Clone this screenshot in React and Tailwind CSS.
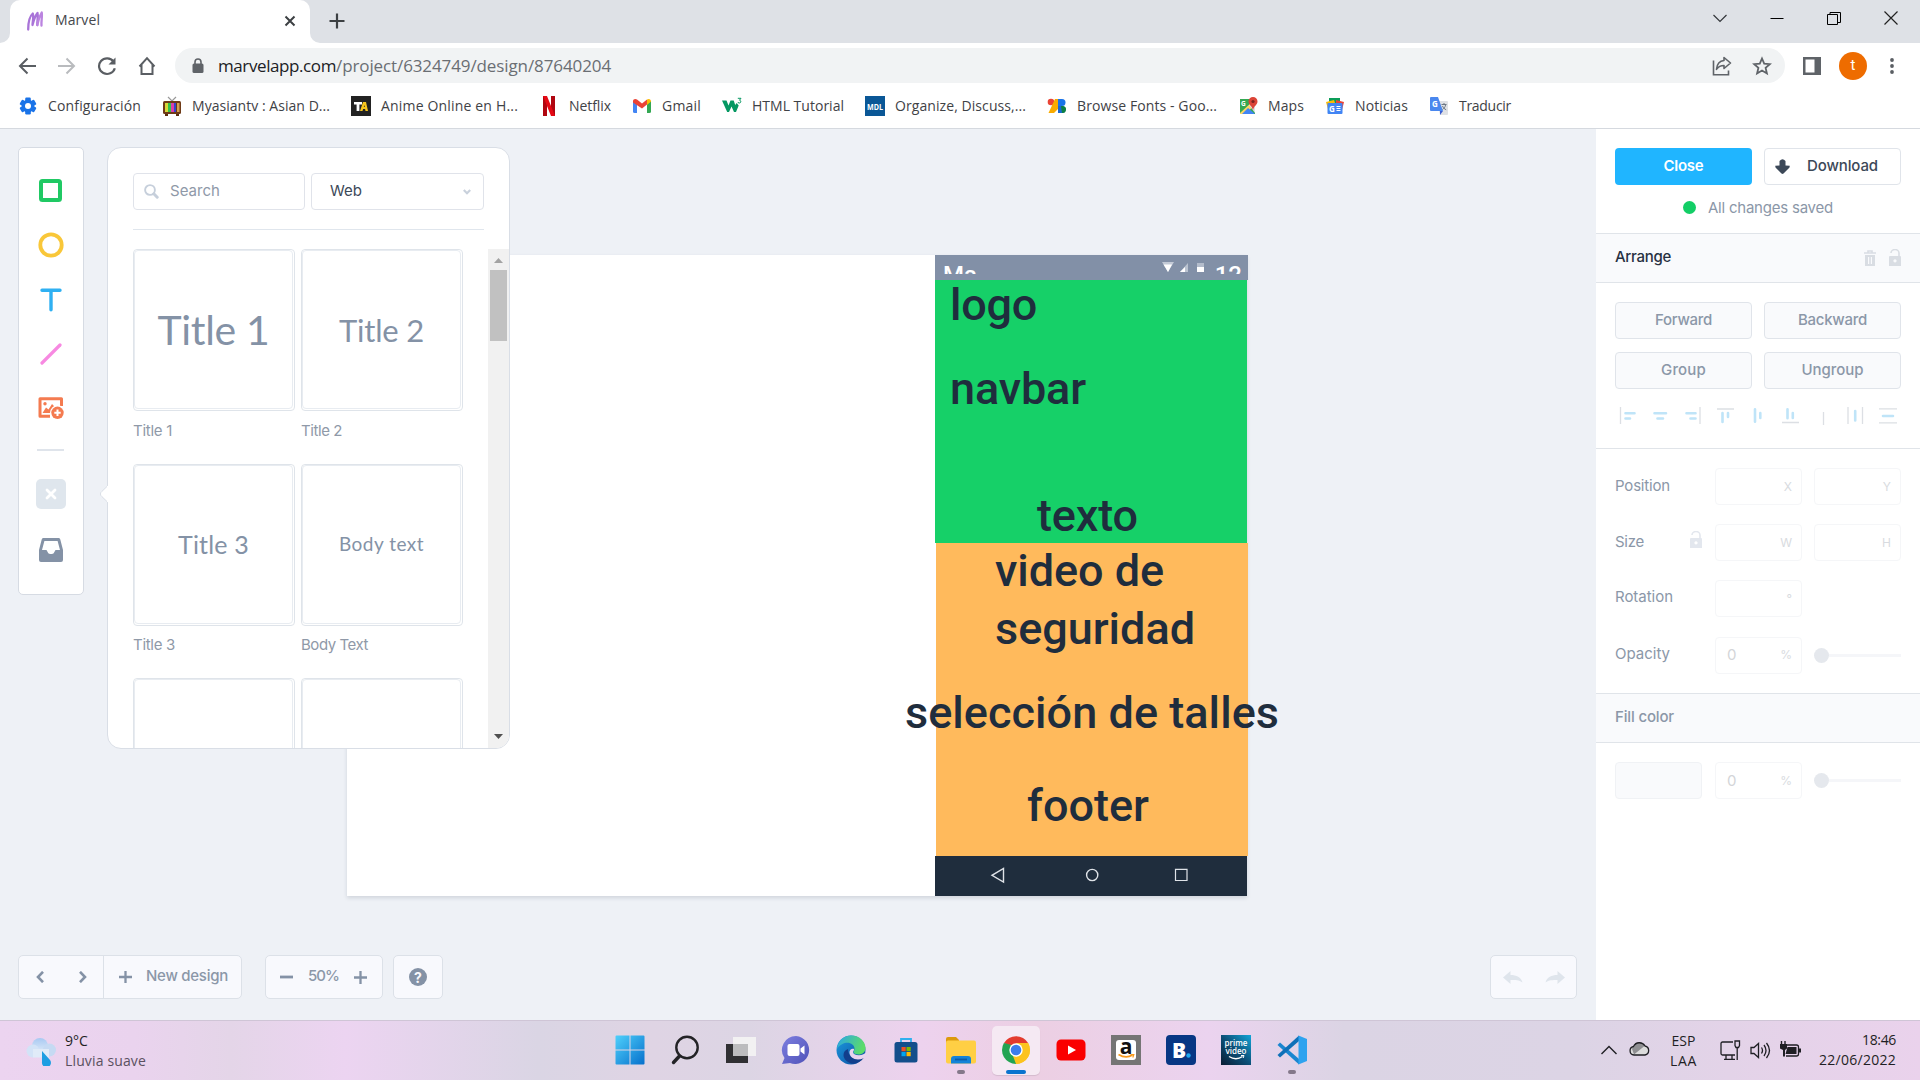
import { useLayoutEffect, useRef, useState } from "react";

// Text set to an exact measure: the tracking is computed from the natural width.
function Fit({ w, className = "", children }) {
  const ref = useRef(null);
  const [ls, setLs] = useState(0);
  useLayoutEffect(() => {
    const natural = ref.current.getBoundingClientRect().width;
    setLs((w - natural) / String(children).length);
  }, [w, children]);
  return (
    <span ref={ref} className={`inline-block shrink-0 whitespace-nowrap ${className}`} style={{ letterSpacing: `${ls}px` }}>
      {children}
    </span>
  );
}

const sys = "font-['Open_Sans','Noto_Sans',sans-serif]";

/* ---------- browser chrome ---------- */

function TabStrip() {
  return (
    <div className="flex h-[43px] bg-[#dee1e6]">
      <svg className="mt-[33px] h-[10px] w-[10px]" viewBox="0 0 10 10"><path d="M10 0v10H0a10 10 0 0 0 10-10z" fill="#fff" /></svg>
      <div className="flex h-[43px] w-[300px] items-start rounded-t-[10px] bg-white pt-[10px]">
        <svg className="ml-[16px] h-[22px] w-[18px]" viewBox="0 0 18 22" fill="none" stroke="#a974d8" strokeWidth="2.300" strokeLinecap="round" strokeLinejoin="round">
          <path d="M2.200 19.500C2.200 13 4 6 6.800 3.500C8 7 6.500 12 6.500 15C7.500 11 9 6 11.500 3C12.500 7 11 11 11.300 15" />
          <path d="M11.300 15C12 11 13.500 6 15.700 2.500C16.500 6 15 12 15.500 15.500" stroke="#bb84e0" />
        </svg>
        <Fit w={45} className="ml-[11px] h-[20px] text-[14px] leading-[20px] text-[#45484c]">Marvel</Fit>
        <svg className="mt-[5px] ml-[184px] h-[12px] w-[12px]" viewBox="0 0 12 12" stroke="#3c4043" strokeWidth="2"><path d="M1.500 1.500l9 9M10.500 1.500l-9 9" /></svg>
      </div>
      <svg className="mt-[33px] h-[10px] w-[10px]" viewBox="0 0 10 10"><path d="M0 0v10h10A10 10 0 0 1 0 0z" fill="#fff" /></svg>
      <svg className="mt-[13px] ml-[9px] h-[16px] w-[16px]" viewBox="0 0 16 16" stroke="#3c4043" strokeWidth="2.200"><path d="M8 0.500v15M.500 8h15" /></svg>
      <div className="ml-auto flex items-start gap-[43px] pt-[11px] pr-[22px]">
        <svg className="h-[14px] w-[14px]" viewBox="0 0 14 14" fill="none" stroke="#33363a" strokeWidth="1.200"><path d="M.500 4L7 10.500L13.500 4" /></svg>
        <svg className="h-[14px] w-[14px]" viewBox="0 0 14 14" stroke="#000" strokeWidth="1"><path d="M.500 7.500h13" /></svg>
        <svg className="h-[14px] w-[14px]" viewBox="0 0 14 14" fill="none" stroke="#000" strokeWidth="1"><path d="M.500 3.500h10v10h-10zM3 3.500V1.500h10.500V11.500H10.500" /></svg>
        <svg className="h-[14px] w-[14px]" viewBox="0 0 14 14" stroke="#222" strokeWidth="1.200"><path d="M.500 .500l13 13M13.500 .500l-13 13" /></svg>
      </div>
    </div>
  );
}

function AddressRow() {
  return (
    <div className="flex h-[45px] items-center bg-white">
      <div className="flex w-[175px] items-center gap-[20px] pl-[17px]">
        <svg className="h-5 w-5" viewBox="0 0 20 20" fill="none" stroke="#5a5e63" strokeWidth="2"><path d="M19 10H3M10.500 2.500L3 10l7.500 7.500" /></svg>
        <svg className="h-5 w-5" viewBox="0 0 20 20" fill="none" stroke="#b9bbbe" strokeWidth="2"><path d="M1 10h16M9.500 2.500L17 10l-7.500 7.500" /></svg>
        <svg className="h-5 w-5" viewBox="0 0 20 20" fill="none" stroke="#5a5e63" strokeWidth="2.200"><path d="M16.500 5.500A8 7.800 0 1 0 17.800 12.200" /><path d="M18.500 1.500v7h-7z" fill="#5a5e63" stroke="none" /></svg>
        <svg className="h-5 w-5" viewBox="0 0 20 20" fill="none" stroke="#5a5e63" strokeWidth="2"><path d="M2.500 10.500L10 2.200l7.500 8.300M4.500 9v9h11V9" /></svg>
      </div>
      <div className="flex h-[35px] w-[1610px] items-center rounded-full bg-[#f1f3f4]">
        <svg className="ml-[17px] h-[16px] w-[12px]" viewBox="0 0 12 16"><rect x=".500" y="5.500" width="11" height="9.500" rx="1.500" fill="#5f6368" /><path d="M3 6V4a3 3 0 0 1 6 0v2" fill="none" stroke="#5f6368" strokeWidth="1.600" /></svg>
        <Fit w={118} className="ml-[14px] h-[26px] text-[17px] leading-[25px] text-[#202124]">marvelapp.com</Fit>
        <Fit w={275} className="h-[26px] text-[17px] leading-[25px] text-[#6a6e73]">/project/6324749/design/87640204</Fit>
        <svg className="ml-auto h-[22px] w-[22px]" viewBox="0 0 22 22" fill="none" stroke="#5f6368" strokeWidth="1.600"><path d="M2.500 5.500v14.300h15v-4.300" /><path d="M13 2.500l6.500 5.500L13 13.500v-3c-3.500 0-5.500 1-7.500 3.800C6 9 9 5.800 13 5.500z" strokeLinejoin="round" /></svg>
        <svg className="mr-[13px] ml-[19px] h-[20px] w-[20px]" viewBox="0 0 20 20" fill="none" stroke="#5f6368" strokeWidth="1.800"><path d="M10 2.500l2.200 5.200 5.600.500-4.200 3.700 1.300 5.500L10 14.500l-4.900 2.900 1.300-5.500L2.200 8.200l5.600-.500z" /></svg>
      </div>
      <svg className="ml-[18px] h-[18px] w-[18px]" viewBox="0 0 18 18"><path d="M0 0h18v18H0z" fill="#5f6368" /><path d="M2.500 2.500h9v13h-9z" fill="#fff" /></svg>
      <span className="ml-[18px] flex h-[28px] w-[28px] items-center justify-center rounded-full bg-[#ee6c00] font-[Roboto,sans-serif] text-[15px] text-white">t</span>
      <svg className="ml-[22px] h-[18px] w-[6px]" viewBox="0 0 6 18" fill="#5a5e63"><circle cx="3" cy="3" r="1.900" /><circle cx="3" cy="9" r="1.900" /><circle cx="3" cy="15" r="1.900" /></svg>
    </div>
  );
}

const bookmarks = [
  [93, "Configuración", <g key="i"><g fill="#1a73e8"><circle cx="10" cy="10" r="6.300" />{[0, 60, 120].map((a) => <rect key={a} x="7.200" y="1.600" width="5.600" height="16.800" rx="1.200" transform={`rotate(${a} 10 10)`} />)}</g><circle cx="10" cy="10" r="3" fill="#fff" /></g>],
  [138, "Myasiantv : Asian D...", <g key="i"><path d="M6 1l4 4 4-4" stroke="#999" fill="none" strokeWidth="1.200" /><rect x="1" y="5" width="18" height="13" rx="1.500" fill="#6e3a17" /><path d="M3 18h3v2H3zM14 18h3v2h-3z" fill="#5b2e10" /><path d="M3 7h3v9H3z" fill="#d8d838" /><path d="M6 7h3v9H6z" fill="#33c24d" /><path d="M9 7h3v9H9z" fill="#db3ea9" /><path d="M12 7h2v9h-2z" fill="#3344cc" /><path d="M15 7h2.500v9H15z" fill="#d5a052" /></g>],
  [137, "Anime Online en H...", <g key="i"><rect width="20" height="20" fill="#222" /><path d="M3 6h8v2.400H8.400V15H5.600V8.400H3z" fill="#fff" /><path d="M9 15l3-9h3l2 9h-2.500l-.400-2h-2l-.600 2zm3.800-4h1l-.300-2z" fill="#f7c51d" /></g>],
  [42, "Netflix", <g key="i" transform="translate(1 0)"><path d="M3 0h4v20H3z" fill="#b00610" /><path d="M11 0h4v20h-4z" fill="#b00610" /><path d="M3 0h4l8 20h-4z" fill="#e50914" /></g>],
  [39, "Gmail", <g key="i"><path d="M1 5h4v12H2.500A1.500 1.500 0 0 1 1 15.500z" fill="#4285f4" /><path d="M15 5h4v10.500a1.500 1.500 0 0 1-1.500 1.500H15z" fill="#34a853" /><path d="M1 5.500C1 3 3.500 2.500 5 3.600L10 7.500l5-3.900v5L10 12.500 1 6.500z" fill="#ea4335" /><path d="M15 3.600c1.800-1.200 4-.600 4 2L15 9z" fill="#fbbc04" /></g>],
  [92, "HTML Tutorial", <g key="i"><path d="M0 4.500h4.500l2 5 2-5h3.200l1.500 4.500 1.500-2 2 2.500L14 16h-2L9.500 10.500 7 16H5.200z" fill="#059862" /><path d="M15.800 2.300h3.200l-1.500 1.900c2 .200 1.500 3-.200 2.800L15.800 6.500" fill="none" stroke="#059862" strokeWidth="1" /></g>],
  [131, "Organize, Discuss,...", <g key="i"><rect width="20" height="20" fill="#0a5796" /><text x="10" y="13.700" textAnchor="middle" textLength="16" lengthAdjust="spacingAndGlyphs" fontSize="9.500" fontWeight="700" fill="#fff">MDL</text></g>],
  [140, "Browse Fonts - Goo...", <g key="i"><circle cx="4" cy="6" r="3.300" fill="#ea4335" /><path d="M8 3h4v9L7 17H1.500z" fill="#f9ab00" /><path d="M11 3h4a3.500 3.500 0 0 1 0 7h-4z" fill="#1a73e8" /><path d="M11 10h4a3.500 3.500 0 0 1 0 7h-4z" fill="#1967d2" /><path d="M14 10h2a3.500 3.500 0 0 1-1 7z" fill="#0d8043" /></g>],
  [36, "Maps", <g key="i"><path d="M2 3h15v15H2z" fill="#34a853" /><path d="M2 17L15 5l2 1v3L7 18H2z" fill="#fdd663" /><path d="M10 12l7 6H4z" fill="#4285f4" /><path d="M11 9l6 8V6z" fill="#dfe3e8" /><path d="M15 1a4.500 4.500 0 0 1 4.500 4.500C19.500 9 15.500 10 15 14.500 14.500 10 10.500 9 10.500 5.500A4.500 4.500 0 0 1 15 1z" fill="#db4437" /><circle cx="15" cy="5.500" r="1.600" fill="#7b231e" /><text x="3" y="9.500" fontSize="6.500" fontWeight="700" fill="#fff">G</text></g>],
  [53, "Noticias", <g key="i"><path d="M4 2h11v7H4z" fill="#0c9d58" /><path d="M1 6l8-2 2 6-8 3z" fill="#fbbc04" /><path d="M11 4l8 2-2 8-6-2z" fill="#ea4335" /><rect x="2.500" y="7" width="15" height="11" rx="1" fill="#4285f4" /><text x="4" y="15.500" fontSize="8" fontWeight="700" fill="#fff">G</text><path d="M11.500 10.500h4M11.500 12.500h4M11.500 14.500h4" stroke="#fff" strokeWidth="1.100" /></g>],
  [52, "Traducir", <g key="i"><path d="M8 5h10a1 1 0 0 1 1 1v12a1 1 0 0 1-1 1h-7z" fill="#dfe1e5" /><path d="M2 1h7l5 14H2a1 1 0 0 1-1-1V2a1 1 0 0 1 1-1z" fill="#4a87ee" /><path d="M11 15h3l-3 4z" fill="#3a5bd0" /><text x="3" y="11" fontSize="8" fontWeight="700" fill="#fff">G</text><path d="M12.500 8.500h5M15 7v1.500M16.700 8.500c-.500 3-2 4-3.200 5M13.500 10c.700 1.800 2 3 3.700 3.800" stroke="#6d7783" fill="none" /></g>],
];

function Bookmarks() {
  return (
    <div className="flex h-[41px] items-center gap-[21px] border-b border-[#d5d9df] bg-white pb-[5px] pl-[18px]">
      {bookmarks.map(([w, label, icon]) => (
        <div key={label} className="flex items-center gap-[10px]">
          <svg className="h-5 w-5 font-['Open_Sans',sans-serif]" viewBox="0 0 20 20">{icon}</svg>
          <Fit w={w} className="h-[20px] text-[14px] leading-[19px] text-[#3f4246]">{label}</Fit>
        </div>
      ))}
    </div>
  );
}

/* ---------- editor ---------- */

function ToolRail() {
  return (
    <div className="absolute top-[18px] left-[18px] flex h-[448px] w-[66px] flex-col items-center rounded-[5px] border border-[#d6dbe3] bg-white pt-[31px] pr-[1px]">
      <svg className="h-[23px] w-[23px]" viewBox="0 0 23 23"><rect x="2" y="2" width="19" height="19" rx="1.500" fill="none" stroke="#20c964" strokeWidth="4" /></svg>
      <svg className="mt-[30px] h-[26px] w-[26px]" viewBox="0 0 26 26"><circle cx="13" cy="13" r="10.700" fill="none" stroke="#f9c739" strokeWidth="3.800" /></svg>
      <svg className="mt-[30px] h-[24px] w-[22px]" viewBox="0 0 22 24" stroke="#2fb0f2" strokeWidth="3.400" strokeLinecap="round"><path d="M2 2.300h18M11 2.300v19.400" /></svg>
      <svg className="mt-[31px] h-[22px] w-[22px]" viewBox="0 0 22 22" stroke="#f789e1" strokeWidth="3.200" strokeLinecap="round"><path d="M2 20L20 2" /></svg>
      <svg className="mt-[32px] h-[22px] w-[26px]" viewBox="0 0 26 22" fill="none">
        <path d="M12 19.300H2V1.700h21.500V9" stroke="#f47b50" strokeWidth="3" strokeLinejoin="round" />
        <circle cx="7" cy="6.800" r="1.700" fill="#f47b50" /><path d="M4.500 16L8 10.500l2.500 2L14 7l3.500 3.500-5 5.500z" fill="#f47b50" />
        <circle cx="19.500" cy="15.800" r="7.500" fill="#fff" /><circle cx="19.500" cy="15.800" r="6.200" fill="#f47b50" /><path d="M19.500 12.600v6.400M16.300 15.800h6.400" stroke="#fff" strokeWidth="2" />
      </svg>
      <span className="mt-[30px] h-[2px] w-[27px] bg-[#dfe4eb]" />
      <span className="mt-[28px] flex h-[30px] w-[30px] items-center justify-center rounded-[5px] bg-[#dfe6ed]">
        <svg className="h-[12px] w-[12px]" viewBox="0 0 12 12" stroke="#fff" strokeWidth="2.800" strokeLinecap="round"><path d="M2 2l8 8M10 2l-8 8" /></svg>
      </span>
      <svg className="mt-[29px] h-[24px] w-[24px]" viewBox="0 0 24 24"><path fillRule="evenodd" d="M4.500 0h15c1 0 1.500.600 1.800 1.500L24 12v10a2 2 0 0 1-2 2H2a2 2 0 0 1-2-2V12L2.700 1.500C3 .600 3.500 0 4.500 0zM5.400 3L3 12h4.500l1.700 3c.700 1.300 4.900 1.300 5.600 0l1.700-3H21L18.600 3z" fill="#8492a6" /></svg>
    </div>
  );
}

const cards = [
  [["Title 1", 112, "text-[41px]", "Title 1", 39], ["Title 2", 85, "text-[31px]", "Title 2", 41]],
  [["Title 3", 71, "text-[25px]", "Title 3", 42], ["Body text", 85, "text-[19px]", "Body Text", 67]],
  [[null], [null]],
];

function Library() {
  return (
    <div className="absolute top-[18px] left-[107px] h-[602px] w-[403px]">
      <svg className="absolute top-[338px] left-[-7px] z-10 h-[18px] w-[9px]" viewBox="0 0 9 18"><path d="M8 .500L1.800 6.500a3 3 0 0 0 0 5L8 17.500" fill="#fff" stroke="#d9dee6" /><path d="M7 1h2v16H7z" fill="#fff" /></svg>
      <div className="flex h-full w-full flex-col overflow-hidden rounded-[14px] border border-[#d9dee6] bg-white">
        <div className="mx-[25px] flex h-[82px] shrink-0 gap-[6px] border-b border-[#e0e6ed] pt-[25px] font-[Inter,sans-serif] text-[15px]">
          <div className="flex h-[37px] w-[172px] items-center rounded-[4px] border border-[#e0e3ea]">
            <svg className="ml-[10px] h-[15px] w-[15px]" viewBox="0 0 15 15" fill="none" stroke="#c6cfdb"><circle cx="6" cy="6" r="4.900" strokeWidth="1.900" /><path d="M9.800 9.800l3.400 3.400" strokeWidth="3" strokeLinecap="round" /></svg>
            <Fit w={50} className="ml-[11px] text-[#8f99a8]">Search</Fit>
          </div>
          <div className="flex h-[37px] w-[173px] items-center rounded-[4px] border border-[#e0e3ea]">
            <Fit w={32} className="ml-[18px] text-[#3c4858]">Web</Fit>
            <svg className="mr-[12px] ml-auto h-[6px] w-[8px]" viewBox="0 0 8 6" fill="none" stroke="#c9d1dc" strokeWidth="2.200"><path d="M.800 1L4 4.200 7.200 1" /></svg>
          </div>
        </div>
        <div className="mt-[19px] flex min-h-0 flex-1 justify-between pl-[25px]">
          <div className="flex flex-col overflow-hidden">
            {cards.map((row, i) => (
              <div key={i} className="flex h-[214.500px] shrink-0 gap-[6px]">
                {row.map(([text, w, size, label, lw], j) => (
                  <div key={j} className="w-[162px]">
                    <div className="h-[162px] rounded-[4px] border border-[#dfe4ea] pr-[1px] pb-[1px]">
                      <div className="flex h-full items-center justify-center rounded-[4px] border border-[#e8ecf1] pt-[1px] font-[Lato,sans-serif] text-[#8492a6]">
                        {text && <Fit w={w} className={size}>{text}</Fit>}
                      </div>
                    </div>
                    {label && <Fit w={lw} className="mt-[8.500px] font-[Inter,sans-serif] text-[15px] text-[#8f99a8]">{label}</Fit>}
                  </div>
                ))}
              </div>
            ))}
          </div>
          <div className="flex w-[21px] flex-col items-center bg-[#f1f1f1]">
            <svg className="mt-[9px] h-[5px] w-[9px]" viewBox="0 0 9 5"><path d="M0 5L4.500 0 9 5z" fill="#a3a3a3" /></svg>
            <span className="mt-[7px] h-[71px] w-[17px] bg-[#c1c1c1]" />
            <svg className="mt-auto mb-[9px] h-[5px] w-[9px]" viewBox="0 0 9 5"><path d="M0 0L4.500 5 9 0z" fill="#505050" /></svg>
          </div>
        </div>
      </div>
    </div>
  );
}

const layers = [
  ["logo", 87, "top-[21px] left-[15px]"],
  ["navbar", 136, "top-[105px] left-[15px]"],
  ["texto", 101, "top-[232px] left-[102px]"],
  ["video de", 169, "top-[287px] left-[60px]"],
  ["seguridad", 200, "top-[345px] left-[60px]"],
  ["selección de talles", 374, "top-[429px] left-[-30px]"],
  ["footer", 122, "top-[522px] left-[92px]"],
];

function Artboard() {
  return (
    <div className="absolute top-[126px] left-[347px] flex h-[641px] w-[900px] justify-end bg-white shadow-[0_2px_4px_rgba(31,45,61,0.14)]">
      <div className="relative -mr-px h-[641px] w-[313px]">
        <div className="flex h-[25px] justify-between bg-[#8290a7] pr-[6px] pl-[8px] font-[Roboto,sans-serif] text-[24px] leading-[28px] font-medium text-white">
          <span className="mt-[6px] h-[13px] overflow-hidden">Ma</span>
          <div className="flex">
            <svg className="mt-[7px] mr-[5px] h-[12px] w-[48px]" viewBox="0 0 48 12"><path d="M0 0Q6 -2 12 0L6 10z" fill="#c3cad6" /><path d="M1.500 2.500h8.500L6 10z" fill="#fff" /><path d="M18 10h8V1z" fill="#bac3d0" /><path d="M18 10h5V5z" fill="#fff" /><path d="M35 1h7v4h-7z" fill="#b3bccb" /><path d="M35 5h7v5h-7z" fill="#fff" /></svg>
            <span className="mt-[6px] h-[13px] overflow-hidden">12</span>
          </div>
        </div>
        <div className="mr-px h-[263px] bg-[#16d068]" />
        <div className="ml-px h-[313px] bg-[#ffba5c]" />
        <div className="mr-px h-[40px] bg-[#1f2d3d]">
          <svg className="h-[40px] w-[312px]" viewBox="0 0 312 40" fill="none" stroke="#dfe3e8" strokeWidth="1.400"><path d="M68.500 12.500v13.500L57 19.300z" /><circle cx="157.200" cy="19" r="5.600" /><path d="M240.500 13.300h11.500v11.200h-11.500z" strokeWidth="1.200" /></svg>
        </div>
        {layers.map(([text, w, place]) => (
          <Fit key={text} w={w} className={`absolute font-[Roboto,sans-serif] text-[45px] leading-[58px] font-medium text-[#1f2d3d] ${place}`}>{text}</Fit>
        ))}
      </div>
    </div>
  );
}

function BottomBar() {
  const box = "flex h-[44px] items-center rounded-[5px] border border-[#dce1e8] bg-[#f8f9fd]";
  return (
    <div className="absolute bottom-[21px] left-[18px] flex w-[1559px] font-[Inter,sans-serif] text-[15px] font-medium text-[#8b97a8]">
      <div className={`${box} w-[224px]`}>
        <div className="flex h-full w-[85px] items-center justify-between border-r border-[#dce1e8] pr-[16px] pl-[17px]">
          <svg className="h-[12px] w-[8px]" viewBox="0 0 8 12" fill="none" stroke="#8492a6" strokeWidth="2.600"><path d="M7 .800L2 6l5 5.200" /></svg>
          <svg className="h-[12px] w-[8px]" viewBox="0 0 8 12" fill="none" stroke="#8492a6" strokeWidth="2.600"><path d="M1 .800L6 6l-5 5.200" /></svg>
        </div>
        <svg className="ml-[15px] h-[12px] w-[13px]" viewBox="0 0 13 12" stroke="#8492a6" strokeWidth="2.300"><path d="M6.500 0v12M0 6h13" /></svg>
        <Fit w={82} className="ml-[14px] -mt-[2px]">New design</Fit>
      </div>
      <div className={`${box} ml-[23px] w-[118px]`}>
        <svg className="ml-[14px] h-[12px] w-[13px]" viewBox="0 0 13 12" stroke="#8492a6" strokeWidth="2.800"><path d="M0 6h13" /></svg>
        <Fit w={31} className="ml-[15px] -mt-[2px]">50%</Fit>
        <svg className="ml-[15px] h-[13px] w-[13px]" viewBox="0 0 13 13" stroke="#8492a6" strokeWidth="2.300"><path d="M6.500 0v13M0 6.500h13" /></svg>
      </div>
      <div className={`${box} ml-[10px] w-[50px] justify-center`}>
        <span className="flex h-[18px] w-[18px] items-center justify-center rounded-full bg-[#8492a6] text-[14px] font-bold text-[#f8f9fd]">?</span>
      </div>
      <div className={`${box} ml-auto w-[87px] justify-between pr-[11px] pl-[12px]`}>
        <svg className="h-[13px] w-[20px]" viewBox="0 0 20 13"><path d="M7.500 0L0 6.500l7.500 6.500V9c5 0 8.500 0 12 2.500C18 6 13.500 4 7.500 4z" fill="#dfe5ec" /></svg>
        <svg className="h-[13px] w-[20px]" viewBox="0 0 20 13"><path d="M12.500 0L20 6.500l-7.500 6.500V9c-5 0-8.500 0-12 2.500C2 6 6.500 4 12.500 4z" fill="#dfe5ec" /></svg>
      </div>
    </div>
  );
}

function Lock({ className }) {
  return (
    <svg className={`h-[17px] w-[12px] ${className}`} viewBox="0 0 12 17"><path fillRule="evenodd" d="M0 8a1 1 0 0 1 1-1h10a1 1 0 0 1 1 1v9H0zM6 10.300a1.600 1.600 0 1 0 .01 0z" fill="currentColor" /><path d="M2 4a4 3.500 0 0 1 8 0v3.500" fill="none" stroke="currentColor" strokeWidth="1.600" /></svg>
  );
}

const grayLine = { stroke: "#dcdfe4", strokeWidth: 1.3 };
const blueLine = { stroke: "#bfe4f8", strokeWidth: 2.6, strokeLinecap: "round" };

function AlignIcons() {
  return (
    <svg className="mt-[18px] ml-[4px] h-[18px] w-[280px]" viewBox="0 0 280 18" fill="none">
      <path {...grayLine} d="M1.500 0v17M81 0v17M98 2h17M163 15.500h17M204.500 5v13M229 0v17M243.500 0v17M260 1.800h18M260 15.800h18" />
      <path {...blueLine} d="M6.500 6.200h9M6.500 11.500h4.500M35.500 6.200h11.500M38.500 11.500h5.500M67.500 6.200h9M71.500 11.500h5M103.500 6v9M109 6v4M136 2.200v12.500M141.300 6v5M168.500 2.200v9M173.800 6v5M236.200 4v9.500M264 9h10" />
    </svg>
  );
}

function Panel({ title, dark, icons }) {
  return (
    <div className="flex h-[50px] shrink-0 items-center border-y border-[#e0e4e9] bg-[#f9fafc] pr-[19px] pl-[19px] font-medium">
      {dark ? <Fit w={56} className="-mt-[2px] text-[#273142]">{title}</Fit> : <Fit w={59} className="-mt-[2px] text-[#8b97a8]">{title}</Fit>}
      {icons}
    </div>
  );
}

function Field({ value, unit }) {
  return (
    <div className="flex h-[37px] w-[87px] items-center justify-between rounded-[4px] border border-[#f5f6f8] pr-[9px] pl-[11px] text-[#d3d5d8]">
      <span className="text-[15px]">{value}</span>
      <span className="text-[12px] text-[#d8dbe0]">{unit}</span>
    </div>
  );
}

function Slider() {
  return (
    <div className="flex w-[87px] items-center">
      <span className="h-[15px] w-[15px] rounded-full bg-[#e5e8ed]" />
      <span className="h-[3px] flex-1 bg-[#f5f6f9]" />
    </div>
  );
}

function Sidebar() {
  const btn = "flex h-[37px] w-[137px] items-center justify-center rounded-[4px] border border-[#e0e4ea] bg-[#f9fafc] font-medium text-[#8b97a8]";
  return (
    <aside className="flex h-[891px] w-[324px] shrink-0 flex-col bg-white font-[Inter,sans-serif] text-[15px] leading-[20px] text-[#8b97a8]">
      <div className="flex h-[104px] flex-col px-[19px] pt-[19px]">
        <div className="flex gap-[12px]">
          <div className="flex h-[37px] w-[137px] items-center justify-center rounded-[4px] bg-[#20b5ff] pb-[2px] font-semibold text-white"><Fit w={40}>Close</Fit></div>
          <div className="flex h-[37px] w-[137px] items-center rounded-[4px] border border-[#e0e4ea] pb-[2px] font-medium text-[#3c4858]">
            <svg className="mt-[2px] ml-[10px] h-[15px] w-[15px]" viewBox="0 0 15 15" fill="#3c4858"><path d="M4.500 2Q7.500-1.500 10.500 2v4.500l4.300.200-.300 1.800L8.500 14.500a1.500 1.500 0 0 1-2 0L.500 8.500.200 6.700l4.300-.200z" /></svg>
            <Fit w={71} className="ml-[17px]">Download</Fit>
          </div>
        </div>
        <div className="mt-[12px] flex items-center pl-[68px]">
          <span className="h-[13px] w-[13px] rounded-full bg-[#13ce66]" />
          <Fit w={125} className="mt-[1px] ml-[12px]">All changes saved</Fit>
        </div>
      </div>
      <Panel title="Arrange" dark icons={<>
        <svg className="ml-auto h-[16px] w-[12px] text-[#d9dde3]" viewBox="0 0 12 16"><path d="M0 3h12M4 3V1h4v2" stroke="currentColor" strokeWidth="1.600" fill="none" /><path fillRule="evenodd" d="M1 5h10v11H1zM4 7v7h1.200V7zM6.800 7v7H8V7z" fill="currentColor" /></svg>
        <Lock className="-mt-[2px] ml-[13px] text-[#d9dde3]" />
      </>} />
      <div className="h-[165px] px-[19px] pt-[19px]">
        <div className="grid grid-cols-[137px_137px] gap-x-[12px] gap-y-[13px]">
          <div className={btn}><Fit w={57} className="-mt-[2px]">Forward</Fit></div>
          <div className={btn}><Fit w={69} className="-mt-[2px]">Backward</Fit></div>
          <div className={btn}><Fit w={45} className="-mt-[2px]">Group</Fit></div>
          <div className={btn}><Fit w={62} className="-mt-[2px]">Ungroup</Fit></div>
        </div>
        <AlignIcons />
      </div>
      <div className="flex h-[245px] flex-col gap-[19.200px] border-t border-[#e0e4e9] px-[19px] pt-[19px]">
        <div className="flex gap-[12px]"><div className="w-[88px] pt-[8px]"><Fit w={55}>Position</Fit></div><Field unit="X" /><Field unit="Y" /></div>
        <div className="flex gap-[12px]"><div className="flex w-[88px] justify-between pt-[8px]"><Fit w={29}>Size</Fit><Lock className="-mt-[1px] mr-[1px] text-[#e3e7ee]" /></div><Field unit="W" /><Field unit="H" /></div>
        <div className="flex gap-[12px]"><div className="w-[88px] pt-[7px]"><Fit w={58}>Rotation</Fit></div><Field unit="°" /></div>
        <div className="flex gap-[12px]"><div className="w-[88px] pt-[7px]"><Fit w={55}>Opacity</Fit></div><Field value="0" unit="%" /><Slider /></div>
      </div>
      <Panel title="Fill color" />
      <div className="flex gap-[12px] px-[19px] pt-[19px]">
        <span className="mr-[1px] h-[37px] w-[87px] rounded-[4px] border border-[#f0f2f5] bg-[#f9fafc]" />
        <Field value="0" unit="%" />
        <Slider />
      </div>
    </aside>
  );
}

/* ---------- taskbar ---------- */

const apps = [
  ["start", <g key="a"><defs><linearGradient id="win" x1="0" y1="0" x2="1" y2="1"><stop stopColor="#4fd0fb" /><stop offset="1" stopColor="#0670cc" /></linearGradient></defs><path d="M.500 1.500a1 1 0 0 1 1-1h13v14H.500zM15.500 .500h13a1 1 0 0 1 1 1v13h-14zM.500 15.500h14v14h-13a1 1 0 0 1-1-1zM15.500 15.500h14v13a1 1 0 0 1-1 1h-13z" fill="url(#win)" /></g>],
  ["search", <g key="a" fill="none" stroke="#232326"><circle cx="16" cy="12.500" r="10.700" strokeWidth="2.400" /><path d="M8.500 21L2.500 27.500" strokeWidth="3.400" strokeLinecap="round" /></g>],
  ["tasks", <g key="a"><path d="M0 9h22v19H0z" fill="#303033" /><path d="M7 2h23v19H7z" fill="#f3f3f3" opacity=".93" /><path d="M7 9h15v12H7z" fill="#bcbcbe" /></g>],
  ["chat", <g key="a"><defs><linearGradient id="chat" x1="0" y1="0" x2="1" y2="1"><stop stopColor="#7d7fe0" /><stop offset="1" stopColor="#4f52b8" /></linearGradient></defs><path d="M15 1a14 14 0 1 1-6 27L1 29l2.500-6A14 14 0 0 1 15 1z" fill="url(#chat)" /><rect x="6.500" y="9" width="12" height="12" rx="2" fill="#fff" /><path d="M19.500 13.500l4-3v9l-4-3z" fill="#fff" /></g>],
  ["edge", <g key="a"><defs><linearGradient id="ed1" x1="0" y1="0" x2="1" y2=".3"><stop stopColor="#2aa5e8" /><stop offset="1" stopColor="#5bdc6a" /></linearGradient><linearGradient id="ed2" x1="0" y1="0" x2="1" y2="1"><stop stopColor="#1c9de0" /><stop offset="1" stopColor="#0c4a9e" /></linearGradient></defs><circle cx="15" cy="15" r="14.500" fill="url(#ed2)" /><path d="M1 14C2 4 9 .500 15 .500c9 0 14.500 6.500 14.500 12.500 0 4-3 6.500-7 6.500-3 0-5-1-5-2.500 0-1 1-1.500 1-3.500C18.500 8 8 4 1 14z" fill="url(#ed1)" /><path d="M12 14c0 7 5 10.500 11 10 2 0 4-1 5-1.500-5 7-13 8-18 3-4-4-3-10 2-11.500z" fill="#123f8c" /><path d="M18 14c0 2-1 2-1 3 0 1.500 2 3.200 6 3.200 3 0 5-1 6.500-2.500l1 2.500-3 3c-7 3-14 0-14-6 0-2 2-4 4.500-3.200z" fill="#e9d4ee" /></g>],
  ["store", <g key="a"><path d="M10 8V4h10v4" fill="none" stroke="#30b0ee" strokeWidth="1.800" /><rect x="3.500" y="7" width="23" height="20.500" rx="2.500" fill="#134e8b" /><path d="M10.500 12h4.200v4.200h-4.200z" fill="#f25022" /><path d="M15.500 12h4.200v4.200h-4.200z" fill="#7fba00" /><path d="M10.500 17h4.200v4.200h-4.200z" fill="#00a4ef" /><path d="M15.500 17h4.200v4.200h-4.200z" fill="#ffb900" /></g>],
  ["files", <g key="a"><path d="M0 4a2 2 0 0 1 2-2h8l3 3v5H0z" fill="#dc9a0c" /><rect x="0" y="5.500" width="30" height="23" rx="2" fill="#ffcf44" /><path d="M5 28.500V24a3 3 0 0 1 3-3h14a3 3 0 0 1 3 3v4.500z" fill="#1483d8" /><path d="M9 24.500h12" stroke="#0b5ca8" strokeWidth="1.800" /></g>],
  ["chrome", <g key="a" transform="translate(1 1)"><path d="M14 14L2 7A14 14 0 0 1 26.100 7z" fill="#e33b2e" /><path d="M14 14L26.100 7A14 14 0 0 1 14 28z" fill="#fcc31e" /><path d="M14 14v14A14 14 0 0 1 1.900 7z" fill="#22a452" /><path d="M14 7h12.100l-5 8z" fill="#e33b2e" /><path d="M20 17.500L14 28l-3-8z" fill="#fcc31e" /><path d="M8 17.500L1.900 7l8 2z" fill="#22a452" /><path d="M26.100 7H14l6 10.500L14 28A14 14 0 0 0 26.100 7z" fill="#fcc31e" /><circle cx="14" cy="14" r="6.700" fill="#fff" /><circle cx="14" cy="14" r="5.300" fill="#3b7ded" /></g>],
  ["youtube", <g key="a"><rect x=".500" y="4.500" width="29" height="21" rx="4.500" fill="#fa0000" /><path d="M12 10.500v9l8-4.500z" fill="#fff" /></g>],
  ["amazon", <g key="a"><path d="M0 0h30v30H0z" fill="#757575" /><rect x="5" y="5" width="20" height="20" rx="3" fill="#fff" /><text x="15" y="19" textAnchor="middle" fontSize="21" fontWeight="700" fill="#111">a</text><path d="M7.500 19.500q7.500 4.500 14 .500" stroke="#f79a1e" strokeWidth="1.700" fill="none" /><path d="M19.500 19.500h3.300l-1 3" stroke="#f79a1e" strokeWidth="1.200" fill="none" /></g>],
  ["booking", <g key="a"><rect width="30" height="30" rx="4" fill="#073784" /><text x="6" y="22.500" fontSize="21" fontWeight="800" fill="#fff">B</text><circle cx="22.500" cy="20.500" r="2.200" fill="#1fa8ef" /></g>],
  ["prime", <g key="a"><defs><linearGradient id="prime" x1="0" y1="1" x2="1" y2="0"><stop stopColor="#0a1c33" /><stop offset=".5" stopColor="#0c5078" /><stop offset="1" stopColor="#12a5d8" /></linearGradient></defs><path d="M0 0h30v30H0z" fill="url(#prime)" /><text x="15" y="11" textAnchor="middle" fontSize="8" fontWeight="600" fill="#fff">prime</text><text x="15" y="19" textAnchor="middle" fontSize="8" fontWeight="600" fill="#fff">video</text><path d="M8 21.500q7 4.500 13.500 0" stroke="#fff" strokeWidth="1.300" fill="none" /><path d="M20 20.500h3l-.800 2.500" stroke="#fff" strokeWidth="1" fill="none" /></g>],
  ["code", <g key="a"><path d="M3 7.500L22 24v5.500L.500 10z" fill="#1a86d0" /><path d="M3 22.500L22 6V.500L.500 20z" fill="#0e70b8" /><path d="M21.500 .500L30 4v22l-8.500 3.500z" fill="#2ea3ef" /></g>],
];

function Taskbar() {
  return (
    <footer className={`grid h-[60px] grid-cols-[1fr_auto_1fr] border-t border-[#cfc5d6] bg-[linear-gradient(90deg,#ecd4f0_0%,#ead3ee_7%,#e4d5e8_12%,#ecd4f1_18%,#dad5e4_28%,#dfd4e4_34%,#dcd5e4_39%,#edd2ee_48%,#eccfe3_54%,#ebd3ef_63%,#dbd4e4_70%,#dcd4e5_82%,#e3d3e8_90%,#ead2ec_100%)] ${sys} text-[14px] text-[#1f1f24]`}>
      <div className="flex pl-[26px]">
        <svg className="mt-[16px] h-[29px] w-[30px]" viewBox="0 0 30 29"><defs><linearGradient id="cl" x1="0" y1="0" x2="0" y2="1"><stop stopColor="#a8c9f2" /><stop offset="1" stopColor="#e3edf9" /></linearGradient></defs><circle cx="14" cy="9" r="8" fill="url(#cl)" /><circle cx="7" cy="14" r="6.500" fill="#d3e3f7" /><circle cx="23.500" cy="13" r="6.500" fill="#c6daf3" /><path d="M7 12h16v8.500H7z" fill="#e0ebf8" /><path d="M16 14l8 9a4.500 4.500 0 1 1-8 2z" fill="#1d9ee2" /></svg>
        <div className="ml-[9px] flex flex-col items-start pt-[10px] leading-[20px]">
          <Fit w={23}>9°C</Fit>
          <Fit w={81} className="text-[#5a5160]">Lluvia suave</Fit>
        </div>
      </div>
      <div className="flex gap-[7.100px] pt-[5px] pl-[2px]">
        {apps.map(([name, icon]) => (
          <div key={name} className={`flex h-[49px] w-[48px] flex-col items-center rounded-[5px] pt-[9px] ${name === "chrome" ? "bg-[#f5e9f3] shadow-[0_1px_1px_rgba(0,0,0,0.1)]" : ""}`}>
            <svg className="h-[30px] w-[30px] shrink-0 font-['Open_Sans',sans-serif]" viewBox="0 0 30 30">{icon}</svg>
            {name === "chrome" && <span className="mt-[5px] h-[4px] w-[20px] rounded-full bg-[#0a74cf]" />}
            {(name === "files" || name === "code") && <span className="mt-[5px] h-[4px] w-[8px] rounded-full bg-[#84788a]" />}
          </div>
        ))}
      </div>
      <div className="flex justify-end pr-[24px] leading-[20px]">
        <svg className="mt-[24px] h-[10px] w-[18px]" viewBox="0 0 18 10" fill="none" stroke="#1f1f24" strokeWidth="1.400"><path d="M1.500 9L9 1.500 16.500 9" /></svg>
        <svg className="mt-[20px] ml-[11px] h-[15px] w-[21px]" viewBox="0 0 21 15"><path d="M5 14a4.300 4.300 0 0 1-.500-8.500A6.500 6.500 0 0 1 16 5a4.600 4.600 0 0 1 0 9z" fill="#dcdcdc" /><path d="M3 8Q3 6 5 5.500 7 1 11 1.300 14 2 15.500 5L5 13.500z" fill="#8f8f92" /><path d="M5 14a4.300 4.300 0 0 1-.500-8.500A6.500 6.500 0 0 1 16 5a4.600 4.600 0 0 1 0 9z" fill="none" stroke="#1f1f24" strokeWidth="1.300" /></svg>
        <div className="ml-[20px] flex w-[27px] flex-col items-center pt-[10px]"><Fit w={24}>ESP</Fit><Fit w={27}>LAA</Fit></div>
        <svg className="mt-[19px] ml-[23px] h-[21px] w-[21px]" viewBox="0 0 21 21" fill="none" stroke="#1f1f24" strokeWidth="1.300"><path d="M13 2H2.500A1.500 1.500 0 0 0 1 3.500v10A1.500 1.500 0 0 0 2.500 15H15M6 15v4M12 15v4M4 19.300h11M15 1h4.500v4.500l-1 2h-2.500l-1-2zM17.200 7.500V20" /></svg>
        <svg className="mt-[20px] ml-[9px] h-[19px] w-[21px]" viewBox="0 0 21 19" fill="none" stroke="#1f1f24" strokeWidth="1.300"><path d="M1 6.500h3l4.500-4v14l-4.500-4H1zM11.500 6.500q2 3 0 6M14 4q4 5.500 0 11M16.500 2q6 7.500 0 15" /></svg>
        <svg className="mt-[20px] ml-[9px] h-[17px] w-[21px]" viewBox="0 0 21 17"><path d="M6 4h10.500A2 2 0 0 1 18.500 6v7a2 2 0 0 1-2 2H6" fill="none" stroke="#1f1f24" strokeWidth="1.300" /><path d="M7.500 6h9v7h-11zM19 7.500h2v4h-2zM0 3h7v4.500L5 9v6.500H3V9L0 7.500z" fill="#1f1f24" /><path d="M1.500 0v4M5 0v4" stroke="#1f1f24" strokeWidth="1.400" /></svg>
        <div className="ml-[18px] flex w-[77px] flex-col items-end pt-[9px]"><Fit w={34}>18:46</Fit><Fit w={77}>22/06/2022</Fit></div>
      </div>
    </footer>
  );
}

export default function App() {
  return (
    <div className={`h-[1080px] w-[1920px] overflow-hidden bg-white ${sys}`}>
      <TabStrip />
      <AddressRow />
      <Bookmarks />
      <div className="flex h-[891px]">
        <main className="relative w-[1596px] shrink-0 bg-[#eef1f6]">
          <Artboard />
          <ToolRail />
          <Library />
          <BottomBar />
        </main>
        <Sidebar />
      </div>
      <Taskbar />
    </div>
  );
}
